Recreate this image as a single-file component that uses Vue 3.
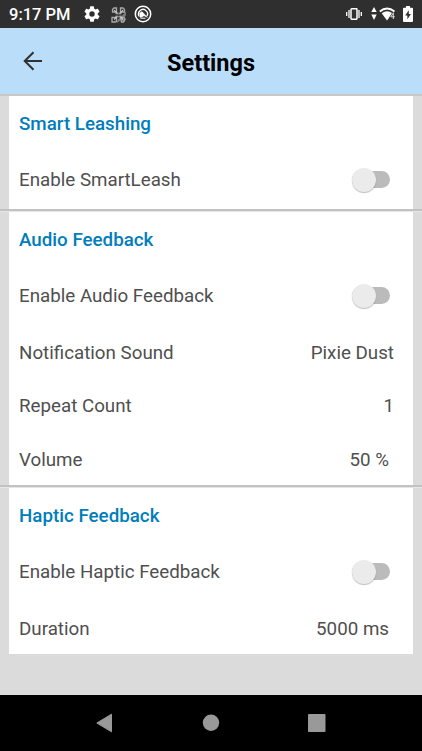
<script setup>
const sections = [
  {
    title: 'Smart Leashing',
    rows: [{ label: 'Enable SmartLeash', toggle: true }],
  },
  {
    title: 'Audio Feedback',
    rows: [
      { label: 'Enable Audio Feedback', toggle: true },
      { label: 'Notification Sound', value: 'Pixie Dust', kind: 'wide' },
      { label: 'Repeat Count', value: '1', kind: 'count' },
      { label: 'Volume', value: '50 %' },
    ],
  },
  {
    title: 'Haptic Feedback',
    rows: [
      { label: 'Enable Haptic Feedback', toggle: true },
      { label: 'Duration', value: '5000 ms' },
    ],
  },
]
</script>

<template>
  <div class="screen">
    <div class="status">
      <span class="clock">9:17 PM</span>
      <svg class="gear" viewBox="2 2 20 20" width="16" height="16">
        <path fill="#fff" d="M19.14 12.94c.04-.3.06-.61.06-.94s-.02-.64-.07-.94l2.03-1.58a.49.49 0 0 0 .12-.61l-1.92-3.32a.49.49 0 0 0-.59-.22l-2.39.96a7 7 0 0 0-1.62-.94l-.36-2.54a.48.48 0 0 0-.48-.41h-3.84a.48.48 0 0 0-.47.41l-.36 2.54c-.59.24-1.13.57-1.62.94l-2.39-.96a.48.48 0 0 0-.59.22L2.74 8.87a.48.48 0 0 0 .12.61l2.03 1.58a6 6 0 0 0 0 1.88l-2.03 1.58a.49.49 0 0 0-.12.61l1.92 3.32c.12.22.37.29.59.22l2.39-.96c.5.38 1.03.7 1.62.94l.36 2.54c.05.24.24.41.48.41h3.84c.24 0 .44-.17.47-.41l.36-2.54a7 7 0 0 0 1.62-.94l2.39.96c.22.08.47 0 .59-.22l1.92-3.32a.48.48 0 0 0-.12-.61zM12 15.4a3.4 3.4 0 1 1 0-6.8 3.4 3.4 0 0 1 0 6.8z" />
      </svg>
      <svg class="drone" viewBox="0 0 16 16" width="16" height="16" fill="none" stroke="#aaa">
        <path d="M4 15.500l11-11v4l-3 3 3 1-2 2.500-3-2-3 2.500z" fill="#777" stroke="none" />
        <path d="M1.500 5V2.500L3 1h2.500v4zM9.500 5V1h2.500l1.500 1.500V5zM1 10.500h4.500V14L4 15H1zM9.500 10.500H13l1 1.500-1.500 3h-2z" stroke-width="1.300" />
        <path d="M3.200 3.200l8.800 9.300M12 3.200l-8.800 9.300" stroke="#ccc" stroke-width="1.200" />
        <path d="M4.500 6.500h6M4.500 9.500h6" stroke-width="1.300" />
        <circle cx="7.500" cy="8" r="1.500" fill="#444" stroke="none" />
      </svg>
      <svg class="badge" viewBox="0 0 18 18" width="18" height="18" fill="none" stroke="#fff">
        <circle cx="9" cy="9" r="7.700" stroke-width="1.500" />
        <path d="M5.300 11.500A4.500 4.500 0 1 1 12.900 11.200" stroke-width="1.300" />
        <path d="M5.500 8L8 6.500l5.500 6-3.500-1.800-1.500 1-2.500.8z" fill="#fff" stroke-width=".4" />
        <path d="M6.500 13.200h5" stroke-width="1" />
      </svg>
      <span class="fill"></span>
      <svg class="vibrate" viewBox="0 0 16 14" width="16" height="14">
        <path d="M.7 5v4M3 3v8M13 3v8M15.300 5v4" stroke="#fff" stroke-width="1.300" />
        <rect x="5" y="1.800" width="6" height="10.400" rx=".7" fill="none" stroke="#fff" stroke-width="1.500" />
      </svg>
      <svg class="traffic" viewBox="0 0 6 13" width="6" height="13">
        <path d="M3 0l2.700 5H.3zM3 13L.3 7.500h5.400z" fill="#fff" />
      </svg>
      <svg class="wifi" viewBox="0 0 17 14" width="17" height="14">
        <path d="M.8 4.500Q8-1.500 15.500 4.500" fill="none" stroke="#fff" stroke-width="1.900" />
        <path d="M2.700 6.200Q8 2.300 13.500 6.200L8 13.500z" fill="#fff" />
        <path d="M14.300 5v7M14.300 5.500l-2.700 4.500h4" fill="none" stroke="#2f2f2f" stroke-width="1.800" />
        <path d="M14.300 5.500v6.500M14.300 6l-2.500 3.800h4" fill="none" stroke="#ddd" stroke-width="1" />
      </svg>
      <svg class="battery" viewBox="0 0 10 16" width="10" height="16">
        <path d="M3 0h4v1.700h2q1 0 1 1V15q0 1-1 1H1q-1 0-1-1V2.700q0-1 1-1h2z" fill="#fff" />
        <path d="M5.800 4.300L2.200 9.600h2.200v3.700l3.500-5.400H5.800z" fill="#2f2f2f" />
      </svg>
    </div>

    <header class="header">
      <svg class="back" viewBox="0 0 20 20" width="20" height="20" fill="none" stroke="#303030" stroke-width="2">
        <path d="M19 10H2.500M10.500 1.200L1.700 10l8.800 8.800" />
      </svg>
      <h1>Settings</h1>
    </header>

    <main class="content">
      <template v-for="section in sections" :key="section.title">
        <div class="divider"></div>
        <section class="card">
          <h2>{{ section.title }}</h2>
          <div v-for="row in section.rows" :key="row.label" class="row" :class="[row.kind, { switchrow: row.toggle }]">
            <span>{{ row.label }}</span>
            <span v-if="row.toggle" class="switch"><span class="thumb"></span></span>
            <span v-else class="value">{{ row.value }}</span>
          </div>
        </section>
      </template>
    </main>

    <nav class="nav">
      <svg viewBox="0 0 18 20" width="18" height="20"><path d="M15.500 1.200L.8 10l14.700 8.800z" fill="#999" stroke="#999" stroke-linejoin="round" /></svg>
      <svg viewBox="0 0 18 18" width="18" height="18"><circle cx="9" cy="8.800" r="8.200" fill="#999" /></svg>
      <svg viewBox="0 0 18 18" width="18" height="18"><rect width="17.500" height="18" rx="1" fill="#999" /></svg>
    </nav>
  </div>
</template>

<style>
body {
  margin: 0;
}
</style>

<style scoped>
.screen {
  width: 422px;
  height: 751px;
  display: flex;
  flex-direction: column;
  overflow: hidden;
  background: #dbdbdb;
  font-family: Roboto, sans-serif;
  color: #4f4f4f;
}
.status {
  height: 28px;
  flex: none;
  display: flex;
  align-items: center;
  padding: 0 9px 0 9px;
  box-sizing: border-box;
  background: #2f2f2f;
}
.clock {
  width: 75px;
  color: #fff;
  font-size: 16.5px;
  font-weight: 500;
  line-height: 28px;
  padding-top: 2px;
  white-space: nowrap;
}
.drone {
  margin-left: 11px;
  margin-top: 1px;
}
.badge {
  margin-left: 7px;
}
.fill {
  flex: 1;
}
.traffic {
  margin-left: 9px;
  margin-top: -2px;
}
.wifi {
  margin-left: 2px;
}
.battery {
  margin-left: 7px;
}
.header {
  height: 66px;
  flex: none;
  box-sizing: border-box;
  padding-left: 23px;
  display: grid;
  grid-template-columns: 20px 1fr 43px;
  align-items: center;
  background: #badefa;
}
h1 {
  margin: 0;
  padding-top: 3px;
  text-align: center;
  color: #000;
  font-size: 23.5px;
  font-weight: 700;
}
.content {
  flex: 1;
}
.divider {
  height: 3px;
  background: linear-gradient(#c2c2c2 0 2px, #e6e6e6 2px);
}
.divider:first-child {
  height: 2px;
  background: #c8c8c8;
}
.card {
  margin: 0 9px;
  background: #fff;
  padding: 0 10px;
}
h2 {
  margin: 0;
  height: 56px;
  line-height: 56px;
  color: #007dbc;
  font-size: 18.75px;
  font-weight: 500;
}
.row {
  height: 53px;
  box-sizing: border-box;
  padding-top: 2px;
  display: flex;
  align-items: center;
  justify-content: space-between;
  font-size: 18.75px;
}
.switchrow {
  height: 57px;
  padding: 0 0 2px;
}
.wide {
  height: 54px;
}
.count {
  padding-top: 0;
}
.value {
  margin-right: 14px;
}
.wide .value {
  margin-right: 9px;
}
.count .value {
  margin-right: 9px;
}
.switch {
  width: 38px;
  height: 17px;
  margin-right: 13px;
  border-radius: 9px;
  display: flex;
  align-items: center;
  background: #bbb;
}
.thumb {
  width: 24px;
  height: 24px;
  flex: none;
  border-radius: 50%;
  background: #ebebeb;
  box-shadow: 0 1px 1px rgba(0, 0, 0, 0.25);
}
.nav {
  height: 56px;
  flex: none;
  display: flex;
  justify-content: space-between;
  align-items: center;
  padding: 0 96px;
  box-sizing: border-box;
  background: #000;
}
</style>
